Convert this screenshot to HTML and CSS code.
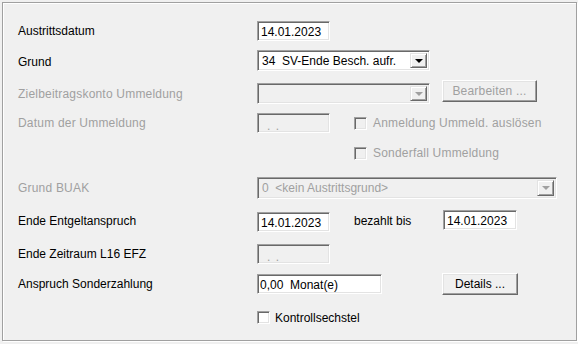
FILE: index.html
```html
<!DOCTYPE html>
<html lang="de">
<head>
    <meta charset="UTF-8">
    <title>Austritt</title>
    <link rel="stylesheet" href="styles.css">
</head>
<body>
    <div class="frame">
        <div class="row r1">
            <span class="lbl">Austrittsdatum</span>
            <div class="edit w73">14.01.2023</div>
        </div>
        <div class="row r2">
            <span class="lbl lbl-low">Grund</span>
            <div class="combo w173">
                <span class="combo-text">34  SV-Ende Besch. aufr.</span>
                <span class="drop"><i class="arrow"></i></span>
            </div>
        </div>
        <div class="row r3">
            <span class="lbl off mid">Zielbeitragskonto Ummeldung</span>
            <div class="combo w173 dis combo-r3">
                <span class="combo-text"></span>
                <span class="drop"><i class="arrow"></i></span>
            </div>
            <div class="btn dis btn-bearb">Bearbeiten ...</div>
        </div>
        <div class="row r4">
            <span class="lbl off">Datum der Ummeldung</span>
            <div class="edit w73 dis dots">. .</div>
            <label class="check dis chk-r4"><span class="box"></span>Anmeldung Ummeld. auslösen</label>
        </div>
        <div class="row r5">
            <span class="lbl"></span>
            <label class="check dis chk-r5"><span class="box"></span>Sonderfall Ummeldung</label>
        </div>
        <div class="row r6">
            <span class="lbl off">Grund BUAK</span>
            <div class="combo w300 dis">
                <span class="combo-text">0  &lt;kein Austrittsgrund&gt;</span>
                <span class="drop"><i class="arrow"></i></span>
            </div>
        </div>
        <div class="row r7">
            <span class="lbl mid">Ende Entgeltanspruch</span>
            <div class="edit w73 edit-r7">14.01.2023</div>
            <span class="bez mid">bezahlt bis</span>
            <div class="edit w74">14.01.2023</div>
        </div>
        <div class="row r8">
            <span class="lbl">Ende Zeitraum L16 EFZ</span>
            <div class="edit w73 dis dots">. .</div>
        </div>
        <div class="row r9">
            <span class="lbl">Anspruch Sonderzahlung</span>
            <div class="edit w125">0,00  Monat(e)</div>
            <div class="btn btn-details">Details ...</div>
        </div>
        <div class="row r10">
            <span class="lbl"></span>
            <label class="check"><span class="box"></span>Kontrollsechstel</label>
        </div>
    </div>
</body>
</html>
```

FILE: styles.css
```css
*{
    margin: 0;
    padding: 0;
    box-sizing: border-box;
}
body{
    width: 578px;
    height: 344px;
    overflow: hidden;
    background: #f0f0f0;
    font-family: "Liberation Sans", Arial, sans-serif;
    font-size: 12px;
    color: #000;
}
.frame{
    margin: 2px 0 0 2px;
    width: 575px;
    height: 339px;
    border: 1px solid #a0a0a0;
    box-shadow: 1px 1px 0 #fff, inset 1px 1px 0 #fff;
    padding: 18px 0 0 15px;
}

/* rows */
.row{
    display: flex;
    align-items: center;
}
.r1{ height: 20px; }
.r2{ height: 21px; margin-top: 9px; }
.r3{ height: 24px; margin-top: 9px; align-items: flex-start; }
.r4{ height: 20px; margin-top: 9px; }
.r5{ height: 20px; margin-top: 10px; }
.r6{ height: 22px; margin-top: 14px; }
.r7{ height: 22px; margin-top: 11px; align-items: flex-start; }
.r8{ height: 20px; margin-top: 12px; }
.r9{ height: 22px; margin-top: 9px; }
.r10{ height: 19px; margin-top: 13px; }

.lbl{
    width: 239px;
    flex-shrink: 0;
    white-space: nowrap;
}
.lbl-low{ padding-top: 2px; }
.off{ color: #a0a0a0; letter-spacing: 0.2px; }
.mid{ align-self: center; }
.r3 .lbl{ margin-top: 7px; align-self: flex-start; }

/* sunken edit field */
.edit{
    height: 20px;
    line-height: 18px;
    padding: 1px 0 0 3px;
    background: #fff;
    border: 1px solid;
    border-color: #a0a0a0 #fff #fff #a0a0a0;
    box-shadow: inset 1px 1px 0 #696969, inset -1px -1px 0 #e3e3e3;
    white-space: pre;
}
.edit.dis{ background: #f0f0f0; color: #a0a0a0; }
.dots{ padding: 3px 0 0 9px; word-spacing: 2px; }
.w73{ width: 73px; }
.w74{ width: 74px; }
.w125{ width: 125px; padding-left: 2px; }
.edit-r7{ margin-top: 2px; }
.bez{
    width: 89px;
    margin-left: 24px;
}

/* combobox */
.combo{
    height: 21px;
    display: flex;
    align-items: center;
    background: #fff;
    border: 1px solid;
    border-color: #a0a0a0 #fff #fff #a0a0a0;
    box-shadow: inset 1px 1px 0 #696969, inset -1px -1px 0 #e3e3e3;
    padding: 2px;
}
.combo.dis{ background: #f0f0f0; color: #a0a0a0; }
.r6 .combo{ height: 22px; }
.w173{ width: 173px; }
.w300{ width: 300px; }
.combo-r3{ margin-top: 3px; }
.combo-text{
    flex: 1;
    padding-left: 2px;
    white-space: pre;
}
.drop{
    width: 17px;
    height: 100%;
    display: flex;
    align-items: center;
    justify-content: center;
    background: #f0f0f0;
    border: 1px solid;
    border-color: #e3e3e3 #696969 #696969 #e3e3e3;
    box-shadow: inset 1px 1px 0 #fff, inset -1px -1px 0 #a0a0a0;
}
.arrow{
    width: 0;
    height: 0;
    border-left: 4px solid transparent;
    border-right: 4px solid transparent;
    border-top: 4px solid #000;
}
.dis .arrow{ border-top-color: #a0a0a0; }

/* push buttons */
.btn{
    height: 22px;
    display: flex;
    align-items: center;
    justify-content: center;
    background: #f0f0f0;
    border: 1px solid;
    border-color: #fff #696969 #696969 #fff;
    box-shadow: inset -1px -1px 0 #a0a0a0, inset 1px 1px 0 #e3e3e3;
    padding-bottom: 1px;
}
.btn.dis{ color: #a0a0a0; letter-spacing: 0.2px; }
.btn-bearb{ width: 95px; margin-left: 12px; }
.btn-details{ width: 76px; margin-left: 60px; }

/* checkboxes */
.check{
    display: flex;
    align-items: center;
    white-space: nowrap;
}
.check.dis{ color: #a0a0a0; letter-spacing: 0.2px; }
.box{
    width: 13px;
    height: 13px;
    margin-right: 5px;
    background: #fff;
    border: 1px solid;
    border-color: #a0a0a0 #fff #fff #a0a0a0;
    box-shadow: inset 1px 1px 0 #696969, inset -1px -1px 0 #e3e3e3;
}
.check.dis .box{ background: #f0f0f0; margin-right: 6px; }
.chk-r4{ margin-left: 24px; }
.chk-r5{ margin-left: 97px; }
```
